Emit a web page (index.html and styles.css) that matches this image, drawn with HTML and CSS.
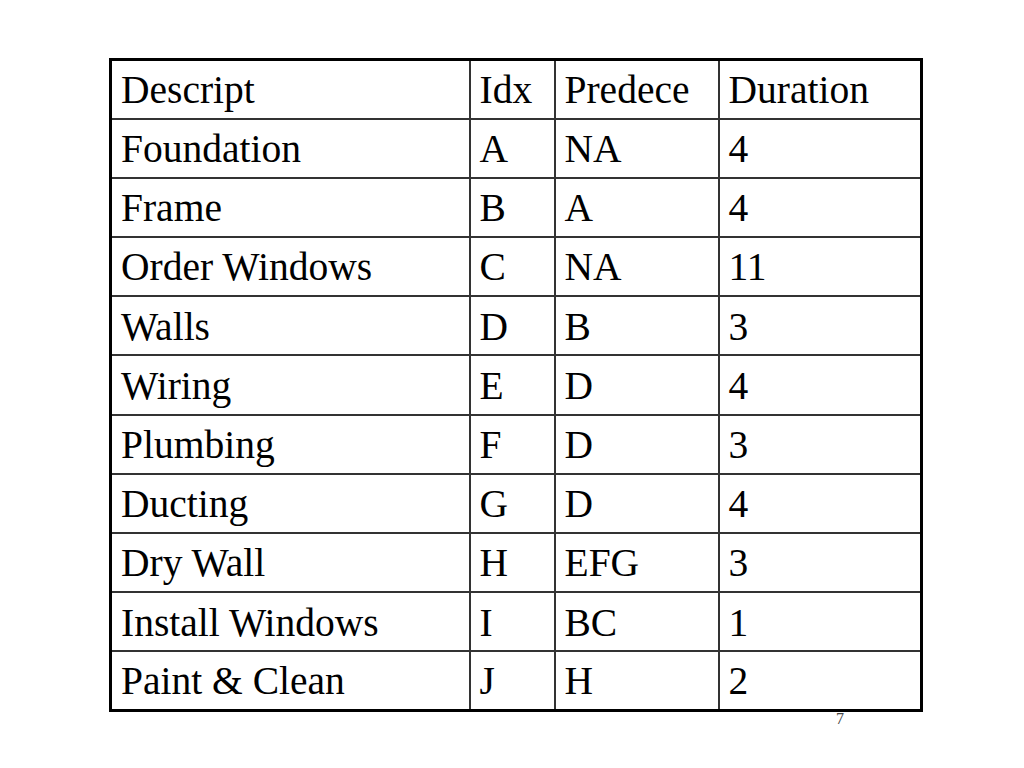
FILE: index.html
```html
<!DOCTYPE html>
<html>
<head>
<meta charset="utf-8">
<link rel="stylesheet" href="styles.css">
</head>
<body>
<div class="slide">
  <table class="tasks">
    <colgroup>
      <col class="c1"><col class="c2"><col class="c3"><col class="c4">
    </colgroup>
    <tr><td>Descript</td><td>Idx</td><td>Predece</td><td>Duration</td></tr>
    <tr><td>Foundation</td><td>A</td><td>NA</td><td>4</td></tr>
    <tr><td>Frame</td><td>B</td><td>A</td><td>4</td></tr>
    <tr><td>Order Windows</td><td>C</td><td>NA</td><td>11</td></tr>
    <tr><td>Walls</td><td>D</td><td>B</td><td>3</td></tr>
    <tr><td>Wiring</td><td>E</td><td>D</td><td>4</td></tr>
    <tr><td>Plumbing</td><td>F</td><td>D</td><td>3</td></tr>
    <tr><td>Ducting</td><td>G</td><td>D</td><td>4</td></tr>
    <tr><td>Dry Wall</td><td>H</td><td>EFG</td><td>3</td></tr>
    <tr><td>Install Windows</td><td>I</td><td>BC</td><td>1</td></tr>
    <tr><td>Paint &amp; Clean</td><td>J</td><td>H</td><td>2</td></tr>
  </table>
  <div class="pagenum">7</div>
</div>
</body>
</html>
```
FILE: styles.css
```css
html, body {
  margin: 0;
  padding: 0;
  background: #fff;
}
body {
  font-family: "Liberation Serif", "Times New Roman", serif;
  color: #000;
}
.slide {
  width: 1024px;
  height: 768px;
  padding-top: 58px;
  padding-left: 109px;
  box-sizing: border-box;
}
.tasks {
  border-collapse: collapse;
  border: 3px solid #000;
  table-layout: fixed;
  width: 811px;
}
.c1 { width: 359px; }
.c2 { width: 85px; }
.c3 { width: 164px; }
.c4 { width: 203px; }
.tasks td {
  border: 2px solid #333;
  height: 59.2px;
  box-sizing: border-box;
  padding: 3px 0 0 9px;
  font-size: 39.5px;
  line-height: 1;
  vertical-align: middle;
  white-space: nowrap;
}
.pagenum {
  width: 811px;
  box-sizing: border-box;
  padding-right: 76px;
  text-align: right;
  font-size: 16px;
  color: #444;
  line-height: 1;
  margin-top: -1px;
}
```
